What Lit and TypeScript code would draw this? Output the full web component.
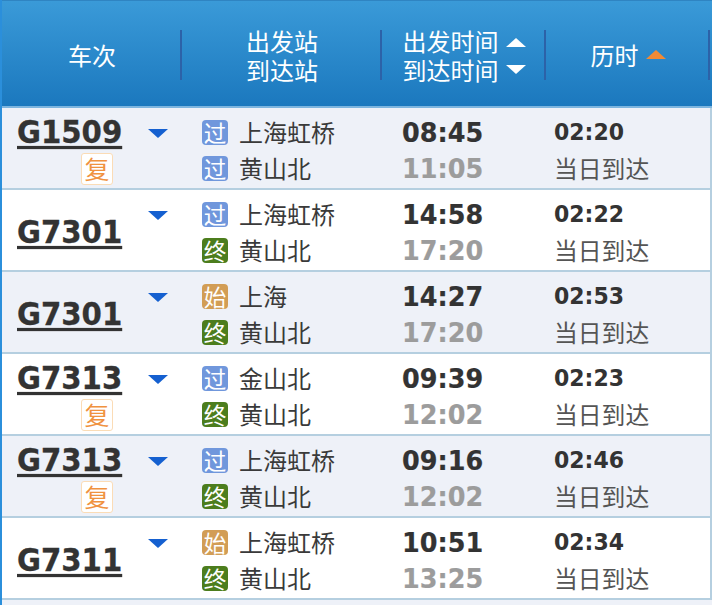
import { LitElement, html, css, nothing } from "lit";
import { customElement } from "lit/decorators.js";

type Kind = "guo" | "shi" | "zhong";
interface Row { no: string; fu: boolean; a: [Kind, string]; b: [Kind, string]; dep: string; arr: string; dur: string; }
const L: Record<Kind, string> = { guo: "过", shi: "始", zhong: "终" };
const rows: Row[] = [
  { no: "G1509", fu: true, a: ["guo", "上海虹桥"], b: ["guo", "黄山北"], dep: "08:45", arr: "11:05", dur: "02:20" },
  { no: "G7301", fu: false, a: ["guo", "上海虹桥"], b: ["zhong", "黄山北"], dep: "14:58", arr: "17:20", dur: "02:22" },
  { no: "G7301", fu: false, a: ["shi", "上海"], b: ["zhong", "黄山北"], dep: "14:27", arr: "17:20", dur: "02:53" },
  { no: "G7313", fu: true, a: ["guo", "金山北"], b: ["zhong", "黄山北"], dep: "09:39", arr: "12:02", dur: "02:23" },
  { no: "G7313", fu: true, a: ["guo", "上海虹桥"], b: ["zhong", "黄山北"], dep: "09:16", arr: "12:02", dur: "02:46" },
  { no: "G7311", fu: false, a: ["shi", "上海虹桥"], b: ["zhong", "黄山北"], dep: "10:51", arr: "13:25", dur: "02:34" },
];

@customElement("app-root")
export class AppRoot extends LitElement {
  static styles = css`
    :host { display: block; width: 712px; height: 605px; overflow: hidden; background: #fff;
      font-family: "Noto Sans CJK SC", "DejaVu Sans", sans-serif; color: #333; box-sizing: border-box;
      border-left: 2px solid #2b8fdb; }
    * { box-sizing: border-box; }
    .grid { display: grid; grid-template-columns: 180px 200px 164px 164px 2px; }
    .head { height: 108px; border-top: 1px solid #2f84c2; border-bottom: 2px solid #7db5df;
      background: linear-gradient(#3a9ad8, #1b78be); color: #fff; font-size: 24px; align-items: center; }
    .hc { display: flex; align-items: center; justify-content: center; text-align: center; height: 50px; margin-top: 2px; border-right: 2px solid #2c62a8; }
    .hc.last { border: none; }
    .hc.shift { padding-left: 2px; }
    .hc .gap { display: flex; align-items: center; gap: 7px; }
    .lines { line-height: 29px; }
    .tri { width: 0; height: 0; border-left: 10px solid transparent; border-right: 10px solid transparent; }
    .tri.up { border-bottom: 9px solid #fff; }
    .tri.dn { border-top: 9px solid #fff; }
    .tri.or { border-bottom: 9px solid #f08a35; }
    .stack { display: flex; flex-direction: column; gap: 18px; margin-top: 2px; }
    .row { height: 82px; border-bottom: 2px solid #b5cfe0; }
    .row.alt { background: #eef1f8; }
    .c1 { display: flex; padding-left: 15px; }
    .train { width: 131px; padding-top: 3px; display: flex; flex-direction: column; justify-content: center; align-items: flex-start; }
    .train.has-fu { padding-top: 5.5px; justify-content: flex-start; }
    .no { display: inline-block; transform: scaleY(1.07); font: bold 29.2px/36px "DejaVu Sans", sans-serif; color: #333; text-decoration: underline; text-decoration-thickness: 2.5px; text-underline-offset: 3px; -webkit-text-stroke: 0.3px #333; }
    .fu { align-self: flex-end; margin: 3.5px 35px 0 0; width: 32px; height: 32px; border: 1.5px solid #fbdcb6; border-radius: 3px; background: #fff;
      color: #f0923f; font-size: 25px; line-height: 29px; text-align: center; }
    .arrow { width: 0; height: 0; margin-top: 21px; border-left: 10px solid transparent; border-right: 10px solid transparent; border-top: 9px solid #1560d0; }
    .c2 { display: flex; flex-direction: column; padding: 6px 0 0 20px; }
    .st { display: flex; align-items: center; height: 36px; font-size: 24px; color: #3a3a3a; gap: 11px; }
    .st .nm { position: relative; top: -1px; }
    .ic { width: 26px; height: 25px; border-radius: 4px; color: #fff; font-size: 22.5px; line-height: 25px; text-align: center; }
    .ic.guo { background: #7097dc; }
    .ic.shi { background: #d29d55; }
    .ic.zhong { background: #4c7d1d; }
    .c3 { padding: 6px 0 0 20px; font: bold 25.5px/36px "DejaVu Sans", sans-serif; }
    .c3 div { transform: scaleY(1.07); transform-origin: left center; -webkit-text-stroke: 0.2px currentColor; }
    .c3 .arr { color: #9c9c9c; }
    .c4 { padding: 7px 0 0 8px; }
    .c4 .d { font: bold 22px/36px "DejaVu Sans", sans-serif; color: #333; transform: scaleY(1.07); }
    .c4 .t { font-size: 23.8px; line-height: 34px; color: #555; }
    .rb { background: #b5cfe0; }
    .alt7 { height: 10px; background: #eef1f8; }
  `;
  render() {
    return html`
      <div class="grid head">
        <div class="hc shift">车次</div>
        <div class="hc shift"><div class="lines">出发站<br />到达站</div></div>
        <div class="hc shift"><div class="gap"><div class="lines">出发时间<br />到达时间</div><div class="stack"><div class="tri up"></div><div class="tri dn"></div></div></div></div>
        <div class="hc shift"><div class="gap">历时<div class="tri or"></div></div></div>
        <div class="hc last"></div>
      </div>
      ${rows.map((r, i) => html`
        <div class="grid row ${i % 2 === 0 ? "alt" : ""}">
          <div class="c1">
            <div class="train ${r.fu ? "has-fu" : ""}"><span class="no">${r.no}</span>${r.fu ? html`<span class="fu">复</span>` : nothing}</div>
            <div class="arrow"></div>
          </div>
          <div class="c2">
            ${[r.a, r.b].map(([k, n]) => html`<div class="st"><span class="ic ${k}">${L[k]}</span><span class="nm">${n}</span></div>`)}
          </div>
          <div class="c3"><div>${r.dep}</div><div class="arr">${r.arr}</div></div>
          <div class="c4"><div class="d">${r.dur}</div><div class="t">当日到达</div></div>
          <div class="rb"></div>
        </div>`)}
      <div class="alt7"></div>
    `;
  }
}
